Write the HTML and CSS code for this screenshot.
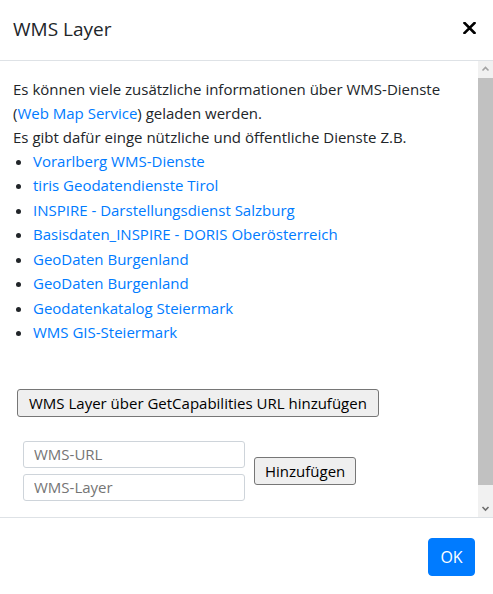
FILE: index.html
```html
<!DOCTYPE html>
<html lang="de">
<head>
<meta charset="utf-8">
<title>WMS Layer</title>
<link rel="stylesheet" href="styles.css">
</head>
<body>
<div class="modal">
  <div class="modal-header">
    <h5 class="modal-title">WMS Layer</h5>
    <button class="close" type="button" aria-label="Close">
      <svg width="13" height="12" viewBox="0 0 13 12"><path d="M1.5 1 L11.5 11 M11.5 1 L1.5 11" stroke="#000" stroke-width="2.6" stroke-linecap="square" fill="none"/></svg>
    </button>
  </div>
  <div class="body-wrap">
    <div class="modal-body">
      <p class="intro">Es können viele zusätzliche informationen über WMS-Dienste (<a href="#">Web Map Service</a>) geladen werden.<br>Es gibt dafür einge nützliche und öffentliche Dienste Z.B.</p>
      <ul class="services">
        <li><a href="#">Vorarlberg WMS-Dienste</a></li>
        <li><a href="#">tiris Geodatendienste Tirol</a></li>
        <li><a href="#">INSPIRE - Darstellungsdienst Salzburg</a></li>
        <li><a href="#">Basisdaten_INSPIRE - DORIS Oberösterreich</a></li>
        <li><a href="#">GeoDaten Burgenland</a></li>
        <li><a href="#">GeoDaten Burgenland</a></li>
        <li><a href="#">Geodatenkatalog Steiermark</a></li>
        <li><a href="#">WMS GIS-Steiermark</a></li>
      </ul>
      <button class="btn-plain btn-caps" type="button">WMS Layer über GetCapabilities URL hinzufügen</button>
      <div class="add-row">
        <div class="inputs">
          <input class="field" type="text" placeholder="WMS-URL">
          <input class="field" type="text" placeholder="WMS-Layer">
        </div>
        <button class="btn-plain btn-add" type="button">Hinzufügen</button>
      </div>
    </div>
    <div class="scrollbar" aria-hidden="true">
      <div class="sb-btn">
        <svg width="15" height="17" viewBox="0 0 15 17"><path d="M4.5 9.5 L7.5 6.5 L10.5 9.5" fill="none" stroke="#a3a3a3" stroke-width="1.6"/></svg>
      </div>
      <div class="sb-track"><div class="sb-thumb"></div></div>
      <div class="sb-btn">
        <svg width="15" height="17" viewBox="0 0 15 17"><path d="M4.5 7 L7.5 10 L10.5 7" fill="none" stroke="#6e6e6e" stroke-width="1.6"/></svg>
      </div>
    </div>
  </div>
  <div class="modal-footer">
    <button class="btn-ok" type="button">OK</button>
  </div>
</div>
</body>
</html>
```
FILE: styles.css
```css
* { box-sizing: border-box; }
html, body { margin: 0; padding: 0; background: #fff; }
body {
  font-family: "Open Sans", "Noto Sans", sans-serif;
  font-size: 15px;
  color: #212529;
}
.modal {
  width: 493px;
  height: 594px;
  display: flex;
  flex-direction: column;
  background: #fff;
}
.modal-header {
  height: 61px;
  flex: none;
  display: flex;
  align-items: center;
  justify-content: space-between;
  padding: 0 17px 2px 13px;
  border-bottom: 1px solid #dee2e6;
}
.modal-title {
  margin: 0;
  font-size: 19px;
  font-weight: 400;
  line-height: 24px;
}
.close {
  border: 0;
  background: transparent;
  padding: 0;
  width: 13px;
  height: 12px;
  display: flex;
  margin-top: -3px;
}
.body-wrap {
  flex: 1;
  min-height: 0;
  display: flex;
}
.modal-body {
  flex: 1;
  min-width: 0;
  overflow: hidden;
  padding: 16px 12px 16px 13px;
}
.scrollbar {
  flex: none;
  width: 15px;
  display: flex;
  flex-direction: column;
  background: #f1f1f1;
}
.sb-btn {
  height: 17px;
  display: flex;
}
.sb-track {
  flex: 1;
  display: flex;
  flex-direction: column;
}
.sb-thumb {
  height: 407px;
  background: #c1c1c1;
}
.intro {
  margin: 0;
  line-height: 24px;
}
a { color: #007bff; text-decoration: none; }
.services {
  margin: 0;
  padding-left: 20px;
  line-height: 24.43px;
}
.btn-plain {
  font-family: inherit;
  font-size: 15px;
  color: #000;
  background: #efefef;
  border: 1px solid #767676;
  border-radius: 3px;
  padding: 0 11px;
  height: 28px;
  line-height: 24px;
}
.btn-caps {
  display: block;
  margin: 44px 0 0 4px;
}
.btn-add { padding: 0 10px; }
.add-row {
  display: flex;
  align-items: center;
  gap: 9px;
  margin: 24px 0 19px 10px;
}
.inputs {
  display: flex;
  flex-direction: column;
  gap: 6px;
}
.field {
  width: 222px;
  height: 27px;
  border: 1px solid #ced4da;
  border-radius: 3px;
  padding: 0 10px;
  font-family: inherit;
  font-size: 15px;
  color: #495057;
}
.field::placeholder { color: #757575; }
.modal-footer {
  flex: none;
  height: 77px;
  border-top: 1px solid #dee2e6;
  display: flex;
  justify-content: flex-end;
  align-items: flex-start;
  padding: 20px 18px 0 0;
}
.btn-ok {
  font-family: inherit;
  font-size: 16px;
  color: #fff;
  background: #007bff;
  border: 1px solid #007bff;
  border-radius: 4px;
  width: 47px;
  height: 38px;
  padding: 0;
}
```
